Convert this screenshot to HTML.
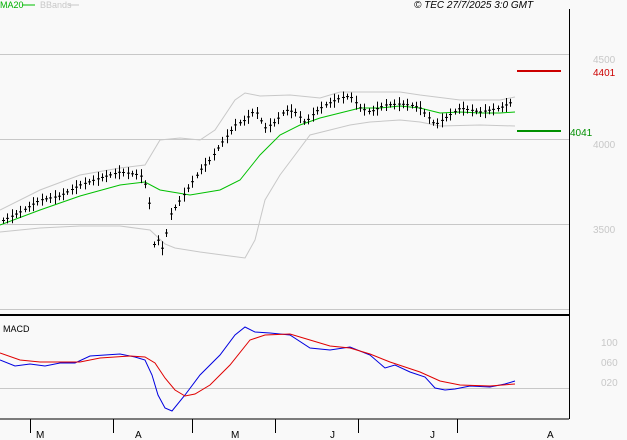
<!DOCTYPE html>
<html><head><meta charset="utf-8"><style>
html,body{margin:0;padding:0;background:#f9f9f9;}
svg{display:block;font-family:"Liberation Sans",sans-serif;}
</style></head><body>
<svg id="s" width="627" height="440" xmlns="http://www.w3.org/2000/svg">
<rect width="627" height="440" fill="#f9f9f9"/>
<g stroke="#c8c8c8" stroke-width="1">
<line x1="0" y1="54.5" x2="569" y2="54.5"/>
<line x1="0" y1="139.5" x2="569" y2="139.5"/>
<line x1="0" y1="224.5" x2="569" y2="224.5"/>
<line x1="0" y1="309.5" x2="569" y2="309.5"/>
<line x1="0" y1="388.5" x2="569" y2="388.5"/>
</g>
<line x1="569.5" y1="9" x2="569.5" y2="419" stroke="#000"/>
<line x1="0" y1="315" x2="569" y2="315" stroke="#000" stroke-width="2"/>
<line x1="0" y1="419" x2="569" y2="419" stroke="#000"/>
<g stroke="#000"><line x1="30.5" y1="419" x2="30.5" y2="433"/><line x1="113.5" y1="419" x2="113.5" y2="433"/><line x1="192.5" y1="419" x2="192.5" y2="433"/><line x1="275.5" y1="419" x2="275.5" y2="433"/><line x1="358.5" y1="419" x2="358.5" y2="433"/><line x1="457.5" y1="419" x2="457.5" y2="433"/></g>
<g font-size="10" fill="#000"><text x="36" y="438">M</text><text x="135" y="438">A</text><text x="231" y="438">M</text><text x="330" y="438">J</text><text x="430" y="438">J</text><text x="547" y="438">A</text></g>
<g fill="none" stroke="#c8c8c8" stroke-width="1">
<polyline points="0,210 40,190 80,175 120,168 145,165 160,140 180,138 200,140 215,130 225,115 235,100 245,93 260,96 290,95 320,98 340,92 360,92 400,92 420,95 460,100 500,100 515,97"/>
<polyline points="0,232 40,228 80,226 120,226 150,230 165,244 175,248 200,252 230,256 245,258 255,240 265,200 280,175 295,155 310,135 330,130 350,125 370,122 400,120 420,122 440,126 480,125 515,126"/>
</g>
<polyline fill="none" stroke="#00c000" stroke-width="1" points="0,225 40,210 80,196 120,185 145,182 160,190 190,195 220,190 240,180 260,155 280,135 300,125 320,118 340,113 360,108 380,108 400,106 420,108 440,113 460,112 480,113 500,113 515,112"/>
<g id="bars" stroke="#000" stroke-width="1"></g>
<line x1="517" y1="71" x2="561" y2="71" stroke="#cc0000" stroke-width="2"/>
<line x1="517" y1="131" x2="561" y2="131" stroke="#009000" stroke-width="2"/>
<text x="593" y="76" font-size="10" fill="#cc0000">4401</text>
<text x="570" y="136" font-size="10" fill="#009000">4041</text>
<g font-size="10" fill="#c8c8c8"><text x="593" y="63">4500</text><text x="593" y="148">4000</text><text x="593" y="233">3500</text><text x="601" y="346">100</text><text x="601" y="366">060</text><text x="601" y="386">020</text></g>
<polyline fill="none" stroke="#0000e0" stroke-width="1" points="0,360 15,366 30,364 45,366 60,363 75,363 90,356 120,354 135,357 145,360 152,375 158,395 165,408 172,411 185,395 200,375 220,355 235,335 245,327 255,332 270,333 290,335 310,348 330,350 350,347 370,355 385,368 395,365 410,372 425,377 435,388 445,390 455,389 470,386 490,387 505,384 515,381"/>
<polyline fill="none" stroke="#e00000" stroke-width="1" points="0,353 20,360 40,362 80,362 100,358 130,356 145,357 155,363 165,378 175,390 185,396 195,394 210,385 230,365 250,340 265,335 290,334 310,340 330,346 350,348 370,354 390,362 420,372 440,381 460,385 490,386 515,384"/>
<text x="3" y="332" font-size="9" fill="#000">MACD</text>
<text x="0" y="8" font-size="9" fill="#00b000">MA20</text>
<line x1="22" y1="5" x2="35" y2="5" stroke="#00c000"/>
<text x="40" y="8" font-size="9" fill="#c8c8c8">BBands</text>
<line x1="68" y1="5" x2="79" y2="5" stroke="#c8c8c8"/>
<text x="414" y="8" font-size="10" font-style="italic" fill="#000">© TEC 27/7/2025 3:0 GMT</text>
</svg>
<script>
var pts=[[0,222],[20,212],[40,200],[60,196],[80,185],[100,178],[120,172],[140,175],[148,190],[153,245],[158,240],[163,250],[170,215],[180,200],[190,185],[200,170],[210,160],[220,145],[235,125],[245,120],[255,110],[265,128],[275,122],[285,110],[295,112],[305,123],[315,112],[325,105],[340,98],[350,96],[360,108],[370,112],[385,105],[400,104],[410,105],[420,108],[435,125],[445,118],[460,108],[480,112],[500,108],[512,102]];
function f(x){for(var i=1;i<pts.length;i++){if(x<=pts[i][0]){var a=pts[i-1],b=pts[i];return a[1]+(b[1]-a[1])*(x-a[0])/(b[0]-a[0]);}}return pts[pts.length-1][1];}
var g=document.getElementById('bars'),h='',k=0;
for(var x=3;x<=514;x+=4.3){var y=f(x),r=3+(k*7%5),x0=Math.round(x)+.5;h+='<line x1="'+x0+'" y1="'+(y-r)+'" x2="'+x0+'" y2="'+(y+r)+'"/><line x1="'+(x0-1.5)+'" y1="'+y+'" x2="'+(x0+1.5)+'" y2="'+y+'"/>';k++;}
g.innerHTML=h;
</script>
</body></html>
